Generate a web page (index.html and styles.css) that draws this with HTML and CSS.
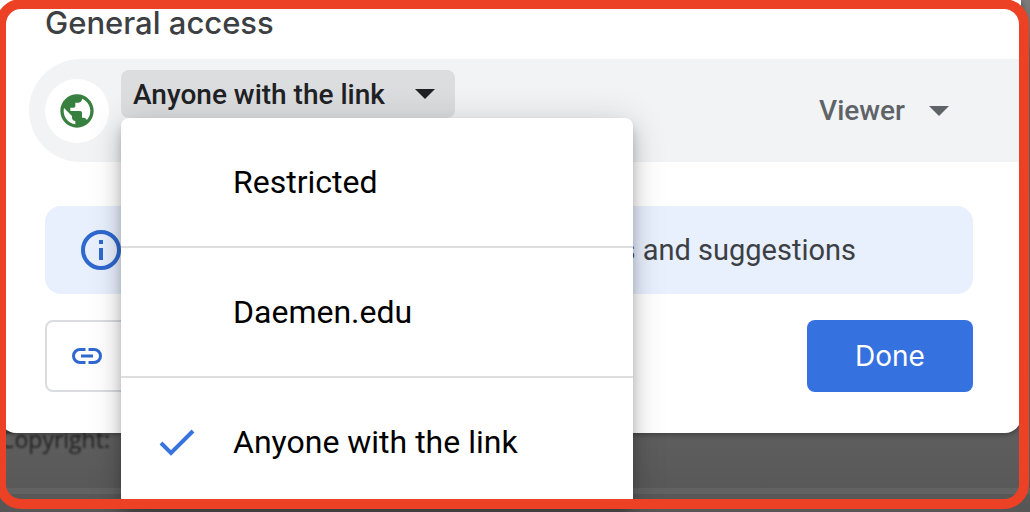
FILE: index.html
```html
<!DOCTYPE html>
<html lang="en">
<head>
<meta charset="utf-8">
<meta name="viewport" content="width=device-width, initial-scale=1">
<title>General access</title>
<link rel="stylesheet" href="styles.css">
</head>
<body class="page">
  <main class="dialog">
    <h2 class="dialog-title">General access</h2>

    <section class="access-row">
      <span class="access-icon">
        <svg width="40" height="40" viewBox="0 0 24 24" fill="currentColor" aria-hidden="true"><path d="M12 2C6.480 2 2 6.480 2 12s4.480 10 10 10 10-4.480 10-10S17.520 2 12 2zM4 12c0-.61.08-1.210.21-1.780L8.990 15v1c0 1.100.9 2 2 2v1.930C7.060 19.430 4 16.070 4 12zm13.890 5.400c-.26-.81-1-1.400-1.900-1.400h-1v-3c0-.55-.45-1-1-1h-6v-2h2c.55 0 1-.45 1-1V7h2c1.100 0 2-.9 2-2v-.41C17.920 5.770 20 8.650 20 12c0 2.080-.81 3.980-2.110 5.400z"/></svg>
      </span>
      <div class="access-scope">
        <button class="scope-button" type="button" aria-haspopup="listbox" aria-expanded="true">
          Anyone with the link
          <svg class="caret" width="20" height="10" viewBox="0 0 20 10" fill="currentColor" aria-hidden="true"><path d="M0 0h20L10 10z"/></svg>
        </button>
        <ul class="menu" role="listbox" aria-label="General access">
          <li class="menu-item" role="option" aria-selected="false"><span class="menu-mark"></span>Restricted</li>
          <li class="menu-item" role="option" aria-selected="false"><span class="menu-mark"></span>Daemen.edu</li>
          <li class="menu-item" role="option" aria-selected="true"><span class="menu-mark"><svg width="36" height="28" viewBox="0 0 36 28" fill="none" stroke="currentColor" stroke-width="4" aria-hidden="true"><path d="M2 15l10 10L34 3"/></svg></span>Anyone with the link</li>
        </ul>
      </div>
      <button class="role-button" type="button" aria-haspopup="listbox">
        Viewer
        <svg class="caret" width="20" height="10" viewBox="0 0 20 10" fill="currentColor" aria-hidden="true"><path d="M0 0h20L10 10z"/></svg>
      </button>
    </section>

    <section class="notice">
      <svg class="notice-icon" width="40" height="40" viewBox="0 0 40 40" fill="none" stroke="currentColor" stroke-width="4" aria-hidden="true"><circle cx="20" cy="20" r="18"/><path d="M20 10v4M20 18v12"/></svg>
      <p class="notice-text">Viewers of this file can see comments and suggestions</p>
    </section>

    <footer class="actions">
      <button class="link-button" type="button">
        <svg width="30" height="16" viewBox="0 0 30 16" fill="none" stroke="currentColor" stroke-width="3" aria-hidden="true"><path d="M13.500 1.500H8a6.500 6.500 0 0 0 0 13h5.500M16.500 1.500H22a6.500 6.500 0 0 1 0 13h-5.500M9 8h12"/></svg>
        Copy link
      </button>
      <button class="done-button" type="button">Done</button>
    </footer>
  </main>

  <div class="backdrop-footer">
    <p class="copyright">Copyright:</p>
  </div>
  <div class="highlight-frame"></div>
</body>
</html>
```
FILE: styles.css
```css
* {
  box-sizing: border-box;
}

.page {
  margin: 0;
  min-height: 100vh;
  height: 100vh;
  overflow: hidden;
  display: flex;
  flex-direction: column;
  background: linear-gradient(#7c7c7c, #5c5c5c 12%, #5e5e5e 85%, #565656);
  font-family: Roboto, "Liberation Sans", sans-serif;
  color: #3c4043;
}

button {
  border: 0;
  margin: 0;
  background: none;
  font: inherit;
  color: inherit;
  cursor: pointer;
}

.dialog {
  position: relative;
  z-index: 1;
  flex: none;
  margin-right: 9px;
  padding: 3px 48px 41px 45px;
  border-radius: 0 0 16px 16px;
  background: #fff;
  box-shadow: 0 1px 6px rgba(0, 0, 0, 0.4);
}

.dialog-title {
  margin: 0 0 16px;
  font: 500 31px/40px Inter, sans-serif;
}

.access-row {
  display: flex;
  align-items: center;
  margin: 0 -48px 0 -16px;
  padding: 11px 72px 11px 16px;
  border-radius: 52px 0 0 52px;
  background: #f1f3f4;
}

.access-icon {
  display: grid;
  place-items: center;
  width: 64px;
  height: 64px;
  border-radius: 50%;
  background: #fff;
  color: #388040;
}

.access-scope {
  position: relative;
  margin: 0 auto 0 12px;
  padding-bottom: 33px;
}

.scope-button {
  display: flex;
  align-items: center;
  gap: 30px;
  height: 48px;
  padding: 0 20px 0 12px;
  border-radius: 8px;
  background: #dcddde;
  color: #202124;
  font-size: 28px;
  font-weight: 500;
}

.role-button {
  display: flex;
  align-items: center;
  gap: 24px;
  padding: 0;
  color: #5f6368;
  font-size: 28px;
  font-weight: 500;
}

.menu {
  position: absolute;
  top: 48px;
  left: 0;
  z-index: 2;
  width: 512px;
  margin: 0;
  padding: 0;
  list-style: none;
  border-radius: 8px;
  background: #fff;
  color: #000;
  box-shadow: 0 6px 10px -2px rgba(0, 0, 0, 0.2),
    0 12px 20px rgba(0, 0, 0, 0.16), 0 2px 36px rgba(0, 0, 0, 0.14);
}

.menu-item {
  display: flex;
  align-items: center;
  height: 128px;
  font-size: 32px;
}

.menu-item + .menu-item {
  height: 130px;
  border-top: 2px solid #dfdfdf;
}

.menu-mark {
  display: grid;
  place-items: center;
  width: 112px;
  color: #3873e0;
}

.notice {
  display: flex;
  align-items: center;
  justify-content: space-between;
  height: 88px;
  margin-top: 44px;
  padding: 0 117px 0 36px;
  border-radius: 16px;
  background: #e8effd;
}

.notice-icon {
  flex: none;
  color: #2f68cf;
}

.notice-text {
  margin: 0;
  font-size: 29px;
  line-height: 32px;
  white-space: nowrap;
}

.actions {
  display: flex;
  justify-content: space-between;
  margin-top: 26px;
}

.link-button {
  display: flex;
  align-items: center;
  gap: 24px;
  height: 72px;
  padding: 0 32px 0 25px;
  border: 2px solid #dadce0;
  border-radius: 8px;
  color: #2f68cf;
  font: 500 28px/32px Inter, sans-serif;
}

.done-button {
  width: 166px;
  height: 72px;
  border-radius: 8px;
  background: #3671e0;
  color: #fff;
  font: 400 28px/32px Inter, sans-serif;
}

.backdrop-footer {
  flex: none;
  height: 61px;
  padding-left: 0;
  border-bottom: 6px solid #626262;
}

.copyright {
  margin: -10px 0 0;
  color: #222;
  font: 500 23px/32px "Open Sans", sans-serif;
  filter: blur(1px);
}

.highlight-frame {
  position: fixed;
  inset: -1px 1px 3px -4px;
  z-index: 3;
  border: 10px solid #ec4125;
  border-radius: 25px;
  pointer-events: none;
}
```
